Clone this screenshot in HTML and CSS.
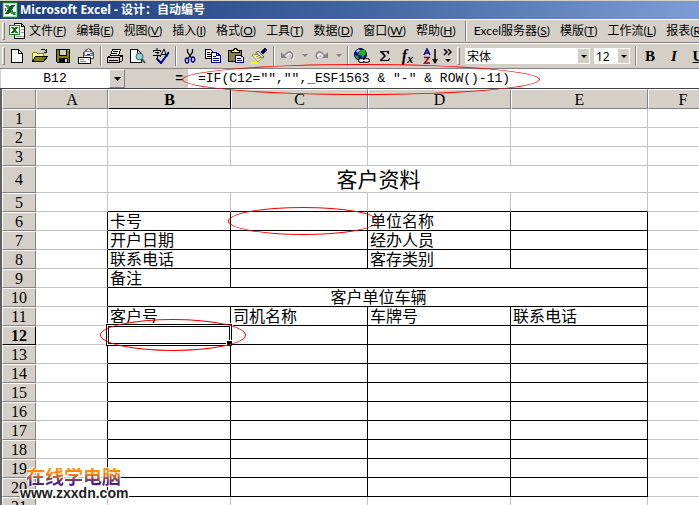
FILE: index.html
```html
<!DOCTYPE html>
<html lang="zh-CN">
<head>
    <meta charset="UTF-8">
    <meta name="viewport" content="width=device-width, initial-scale=1.0">
    <title>Microsoft Excel - 设计：自动编号</title>
    <link rel="stylesheet" href="styles.css">
</head>
<body>
    <header class="titlebar">
        <svg class="app-icon" width="16" height="16" viewBox="0 0 16 16" shape-rendering="crispEdges">
            <path fill="#fff" d="M0 0h16v16H0z"/>
            <path fill="none" stroke="#1a7a2c" d="M.5.5h15v15H.5z"/>
            <path fill="none" stroke="#a5d6a5" d="M1.500 1.500h13v13h-13z"/>
            <path fill="#2a9a3c" d="M3 3h4l6 9H9z"/>
            <path fill="#0c5a1c" d="M9 3h4l-6 9H3z"/>
            <path fill="#1a7a2c" d="M11 10h3v1h-3zM11 12h3v1h-3zM3 6h1v3H3z"/>
        </svg>
        <h1>Microsoft Excel - 设计：自动编号</h1>
    </header>

    <nav class="menubar">
        <span class="grip"></span>
        <svg class="doc-icon" width="16" height="16" viewBox="0 0 16 16" shape-rendering="crispEdges">
            <path fill="#fff" stroke="#000" d="M5.5.5h7l3 3v12h-10z"/>
            <path fill="none" stroke="#000" d="M12.5.5v3h3"/>
            <path fill="#999" d="M12 6h3v1h-3zM12 9h3v1h-3zM7 13h8v1H7z"/>
            <path fill="#fff" stroke="#148a28" d="M.5 2.500h10v9H.5z"/>
            <path fill="#148a28" d="M2 4h3l4 6H6z"/>
            <path fill="#0c6a1c" d="M6 4h3l-4 6H2z"/>
        </svg>
        <a href="#">文件(<u>F</u>)</a>
        <a href="#">编辑(<u>E</u>)</a>
        <a href="#">视图(<u>V</u>)</a>
        <a href="#">插入(<u>I</u>)</a>
        <a href="#">格式(<u>O</u>)</a>
        <a href="#">工具(<u>T</u>)</a>
        <a href="#">数据(<u>D</u>)</a>
        <a href="#">窗口(<u>W</u>)</a>
        <a href="#">帮助(<u>H</u>)</a>
        <span class="sep"></span>
        <a href="#">Excel服务器(<u>S</u>)</a>
        <a href="#">模版(<u>T</u>)</a>
        <a href="#">工作流(<u>L</u>)</a>
        <a href="#">报表(<u>R</u>)</a>
    </nav>

    <div class="toolbar">
        <span class="grip"></span>
        <button class="tool" aria-label="新建">
            <svg viewBox="0 0 16 16" shape-rendering="crispEdges"><path fill="#fff" stroke="#000" d="M2.500 1.500h7l4 4v9h-11z"/><path fill="none" stroke="#000" d="M9.500 1.500v4h4"/></svg>
        </button>
        <button class="tool" aria-label="打开">
            <svg viewBox="0 0 16 16" shape-rendering="crispEdges"><path fill="#ffff9c" stroke="#808000" d="M.5 13.500v-8l1-1h3l1 1h6v3"/><path fill="#848200" stroke="#000" d="M.5 13.500l3-5h12l-4 5z"/><path fill="none" stroke="#000" d="M8.500 2.500l1-1h3l2 2M14.500 1v3.500h-3"/></svg>
        </button>
        <button class="tool" aria-label="保存">
            <svg viewBox="0 0 16 16" shape-rendering="crispEdges"><path fill="#848200" stroke="#000" d="M1.500 1.500h13v13h-12l-1-1z"/><path fill="#d4d0c8" stroke="#000" d="M4.500 1.500h7v6h-7z"/><path fill="#000" d="M4 10h9v5H4z"/><path fill="#d4d0c8" d="M10 11h2v3h-2zM13 2h1v1h-1z"/></svg>
        </button>
        <button class="tool" aria-label="电子邮件">
            <svg viewBox="0 0 16 16" shape-rendering="crispEdges"><path fill="#fff" stroke="#555" d="M5.500 9.500v-5l5-4 5 4v6h-10z"/><path fill="#fff" stroke="#777" d="M6.500 3.500h8v4h-8z"/><path fill="#f00" d="M12 5h2v1h-2z"/><path fill="#008" d="M9 6h3v1H9z"/><path fill="#fff" stroke="#000" d="M.5 9.500h12v6H.5z"/><path stroke="#888" d="M2 11.500h4M2 13.500h6M10 11.500h1"/></svg>
        </button>
        <span class="sep"></span>
        <button class="tool" aria-label="打印">
            <svg viewBox="0 0 16 16" shape-rendering="crispEdges"><path fill="#fff" stroke="#000" d="M5.500 1.500h8l-2 6h-8z"/><path stroke="#000" d="M6 3.500h5M5 5.500h5"/><path fill="#d4d0c8" stroke="#000" d="M.5 9.500l3-2h12v5l-3 2H.5z"/><path fill="none" stroke="#000" d="M.5 9.500h12v5M12.500 9.500l3-2"/><path fill="#000" d="M2 12h9v1H2z"/><path fill="#ff0" d="M8 11h2v1H8z"/></svg>
        </button>
        <button class="tool" aria-label="打印预览">
            <svg viewBox="0 0 16 16"><path fill="#fff" stroke="#000" shape-rendering="crispEdges" d="M.5 1.500h7l4 4v9H.5z"/><path fill="none" stroke="#000" shape-rendering="crispEdges" d="M7.500 1.500v4h4"/><circle cx="9.500" cy="8.500" r="3.500" fill="#7cd8dc" stroke="#555"/><path stroke="#456" stroke-width="2" d="M12 11l3 4"/></svg>
        </button>
        <button class="tool" aria-label="拼写检查">
            <svg viewBox="0 0 16 16"><path fill="none" stroke="#000" d="M4 0v2M.5 4V2.500h7V4M2 4.500h4L4 6.500M0 7.500h8M4.500 7v3.500H3M7 9l4-8 3 8M9 6.500h5"/><path fill="none" stroke="#000084" stroke-width="2" d="M4 11l4 4 8-11"/></svg>
        </button>
        <span class="sep"></span>
        <button class="tool" aria-label="剪切">
            <svg viewBox="0 0 16 16"><path stroke="#000" fill="none" stroke-width="1.300" d="M5.500 1v3l4 6M10.500 1v3l-4 6"/><ellipse cx="5" cy="12.500" rx="1.700" ry="2.500" fill="none" stroke="#000084" stroke-width="1.300"/><ellipse cx="11" cy="11.500" rx="1.700" ry="2.500" fill="none" stroke="#000084" stroke-width="1.300"/></svg>
        </button>
        <button class="tool" aria-label="复制">
            <svg viewBox="0 0 16 16" shape-rendering="crispEdges"><path fill="#fff" stroke="#000" d="M.5 1.500h5l3 3v6h-8z"/><path stroke="#000" d="M2 4.500h3M2 6.500h5M2 8.500h5"/><path fill="#fff" stroke="#000084" d="M6.500 4.500h5l4 3v7h-9z"/><path fill="none" stroke="#000084" d="M11.500 4.500v3h4M8 8.500h3M8 10.500h6M8 12.500h6"/></svg>
        </button>
        <button class="tool" aria-label="粘贴">
            <svg viewBox="0 0 16 16" shape-rendering="crispEdges"><path fill="#84824a" stroke="#000" d="M.5 2.500h13v11H.5z"/><path fill="#ffff84" stroke="#000" d="M3.500 4.500v-2h2l1-2h2l1 2h2v2z"/><path fill="#fff" stroke="#000084" d="M7.500 7.500h5l3 2v5h-8z"/><path stroke="#000084" d="M9 10.500h4M9 12.500h5"/></svg>
        </button>
        <button class="tool" aria-label="格式刷">
            <svg viewBox="0 0 16 16"><path fill="#000084" stroke="#000" d="M10 4l4-4 2 2-4 4z"/><path fill="#e8e6dc" stroke="#555" d="M7 3l6 6-2 1-6-5z"/><path fill="#ffff84" stroke="#777" stroke-width=".7" d="M5 5l6 5-4 4-6-7z"/><path stroke="#555" stroke-width=".7" d="M3 7l4-1M5 9l4-2M6 11l4-2"/><path fill="#ff0" d="M0 14h7v2H0z"/></svg>
        </button>
        <span class="sep"></span>
        <button class="tool" aria-label="撤消">
            <svg viewBox="0 0 16 16"><path fill="none" stroke="#fff" stroke-width="1.500" d="M4 9l4-3c4-3 8 2 4 6"/><path fill="none" stroke="#848284" stroke-width="1.500" d="M3 9l4-4c4-3 8 2 4 6"/><path fill="#848284" d="M1 4v6h6z"/></svg>
        </button>
        <button class="tool drop" aria-label="撤消列表"><svg viewBox="0 0 7 4"><path fill="#848284" d="M1 0h6L4 3z"/></svg></button>
        <button class="tool" aria-label="恢复">
            <svg viewBox="0 0 16 16"><path fill="none" stroke="#fff" stroke-width="1.500" d="M12 10L9 7C5 4 1 9 5 12"/><path fill="none" stroke="#848284" stroke-width="1.500" d="M12 9L8 5C4 2 0 7 4 11"/><path fill="#848284" d="M14 4v6H8z"/></svg>
        </button>
        <button class="tool drop" aria-label="恢复列表"><svg viewBox="0 0 7 4"><path fill="#848284" d="M1 0h6L4 3z"/></svg></button>
        <span class="sep"></span>
        <button class="tool" aria-label="超链接">
            <svg viewBox="0 0 16 16"><circle cx="6.500" cy="6.500" r="6" fill="#0000c6" stroke="#003"/><path fill="#21b221" d="M6 2l5 0 1 4-4 4-1-3-3 0zM1 7l3 1 1 4-3-2z"/><path fill="#9ce" d="M2 3l3-2 1 2-3 2z"/><rect x="4.500" y="10.500" width="6" height="4" rx="2" fill="#d4d0c8" stroke="#000"/><rect x="9.500" y="10.500" width="6" height="4" rx="2" fill="#d4d0c8" stroke="#000"/><path stroke="#fff" d="M7 12.500h6"/></svg>
        </button>
        <button class="tool" aria-label="自动求和">
            <svg viewBox="0 0 16 16"><path fill="#000" d="M3 3h9v3h-1l-1-2H6l3 4-4 4h6l1-2h1l-1 3H3v-1l4-4-4-4z"/></svg>
        </button>
        <button class="tool fx" aria-label="粘贴函数"><i>f</i><i class="small">x</i></button>
        <button class="tool" aria-label="升序排序">
            <svg viewBox="0 0 16 16"><path fill="none" stroke="#000084" stroke-width="1.500" d="M1 7l3-6 3 6M2 5h4"/><path fill="none" stroke="#84001c" stroke-width="1.500" d="M1 9.500h5L1.500 15H7"/><path stroke="#000" stroke-width="1.500" d="M12 1v12"/><path fill="#000" d="M9 11h6l-3 5z"/></svg>
        </button>
        <button class="tool drop more" aria-label="其他按钮">
            <svg viewBox="0 0 9 14"><path fill="none" stroke="#000" stroke-width="1.500" d="M1 0l3 3-3 3M5 0l3 3-3 3"/><path fill="#000" d="M2 10h6l-3 3z"/></svg>
        </button>
        <span class="grip"></span>
        <span class="combo font-combo">
            <select aria-label="字体"><option>宋体</option></select>
            <svg class="arrow" viewBox="0 0 11 14"><path fill="#000" d="M3 6h6L6 9z"/></svg>
        </span>
        <span class="combo size-combo">
            <select aria-label="字号"><option>12</option></select>
            <svg class="arrow" viewBox="0 0 11 14"><path fill="#000" d="M3 6h6L6 9z"/></svg>
        </span>
        <span class="sep"></span>
        <button class="tool text"><b>B</b></button>
        <button class="tool text"><i>I</i></button>
        <button class="tool text"><u>U</u></button>
    </div>

    <div class="formula-bar">
        <input class="name-box" type="text" value="B12" aria-label="名称框">
        <button class="name-arrow" aria-label="名称列表"><svg viewBox="0 0 7 4"><path fill="#000" d="M0 0h7L3.500 4z"/></svg></button>
        <span class="equals">=</span>
        <div class="formula">
            <input type="text" value='=IF(C12="","",_ESF1563 &amp; "-" &amp; ROW()-11)' aria-label="编辑栏">
            <span class="mark mark-formula"></span>
        </div>
    </div>

    <main class="sheet">
        <table>
            <colgroup>
                <col class="col-head"><col class="col-a"><col class="col-b"><col class="col-c"><col class="col-d"><col class="col-e"><col>
            </colgroup>
            <thead>
                <tr><th></th><th>A</th><th class="active">B</th><th>C</th><th>D</th><th>E</th><th>F</th></tr>
            </thead>
            <tbody>
                <tr><th>1</th><td></td><td></td><td></td><td></td><td></td><td></td></tr>
                <tr><th>2</th><td></td><td></td><td></td><td></td><td></td><td></td></tr>
                <tr><th>3</th><td></td><td></td><td></td><td></td><td></td><td></td></tr>
                <tr class="tall"><th>4</th><td></td><td colspan="4" class="title">客户资料</td><td></td></tr>
                <tr class="top-edge"><th>5</th><td></td><td></td><td></td><td></td><td></td><td></td></tr>
                <tr class="boxed"><th>6</th><td></td><td>卡号</td><td><span class="mark mark-card"></span></td><td>单位名称</td><td></td><td></td></tr>
                <tr class="boxed"><th>7</th><td></td><td>开户日期</td><td></td><td>经办人员</td><td></td><td></td></tr>
                <tr class="boxed"><th>8</th><td></td><td>联系电话</td><td></td><td>客存类别</td><td></td><td></td></tr>
                <tr class="boxed"><th>9</th><td></td><td>备注</td><td colspan="3"></td><td></td></tr>
                <tr class="boxed"><th>10</th><td></td><td colspan="4" class="center">客户单位车辆</td><td></td></tr>
                <tr class="boxed"><th>11</th><td></td><td>客户号</td><td>司机名称</td><td>车牌号</td><td>联系电话</td><td></td></tr>
                <tr class="boxed"><th class="active">12</th><td></td><td><span class="selection"></span><span class="mark mark-cell"></span></td><td></td><td></td><td></td><td></td></tr>
                <tr class="boxed"><th>13</th><td></td><td></td><td></td><td></td><td></td><td></td></tr>
                <tr class="boxed"><th>14</th><td></td><td></td><td></td><td></td><td></td><td></td></tr>
                <tr class="boxed"><th>15</th><td></td><td></td><td></td><td></td><td></td><td></td></tr>
                <tr class="boxed"><th>16</th><td></td><td></td><td></td><td></td><td></td><td></td></tr>
                <tr class="boxed"><th>17</th><td></td><td></td><td></td><td></td><td></td><td></td></tr>
                <tr class="boxed"><th>18</th><td></td><td></td><td></td><td></td><td></td><td></td></tr>
                <tr class="boxed"><th>19</th><td></td><td></td><td></td><td></td><td></td><td></td></tr>
                <tr class="boxed"><th>20</th><td></td><td></td><td></td><td></td><td></td><td></td></tr>
                <tr><th>21</th><td></td><td></td><td></td><td></td><td></td><td></td></tr>
            </tbody>
        </table>
        <div class="watermark">
            <strong>在线学电脑</strong>
            <span>www.zxxdn.com</span>
        </div>
    </main>
</body>
</html>
```
FILE: styles.css
```css
* {
    margin: 0;
    padding: 0;
    box-sizing: border-box;
}

body {
    display: flex;
    flex-direction: column;
    height: 100vh;
    overflow: hidden;
    background: #d4d0c8;
    color: #000;
    font-family: "Noto Sans", "Noto Sans CJK SC", sans-serif;
    font-size: 12px;
}

button,
input,
select {
    border: none;
    border-radius: 0;
    background: none;
    color: inherit;
    font: inherit;
}

/* Title bar */
.titlebar {
    display: flex;
    flex: none;
    align-items: center;
    height: 18px;
    margin-top: 1px;
    padding-left: 2px;
    background: linear-gradient(90deg, #1c3c7c, #40649f 50%, #7c9cd4);
    color: #fff;
}

.titlebar h1 {
    margin-left: 2px;
    font-family: "Open Sans", "Noto Sans CJK SC", sans-serif;
    font-size: 12px;
    font-weight: 700;
    line-height: 18px;
    white-space: nowrap;
}

/* Menu and toolbar */
.menubar,
.toolbar {
    display: flex;
    flex: none;
    align-items: center;
    overflow: hidden;
    border-top: 1px solid #fff;
    border-bottom: 1px solid #848284;
    white-space: nowrap;
}

.menubar {
    gap: 10px;
    height: 24px;
    padding-left: 2px;
    font-family: Lato, "Noto Sans CJK SC", sans-serif;
}

.menubar a {
    flex: none;
    color: #000;
    line-height: 22px;
    text-decoration: none;
}

.menubar .grip,
.menubar .doc-icon {
    margin-right: -6px;
}

.menubar .sep {
    margin: 0 -4px;
}

svg {
    flex: none;
}

.grip {
    flex: none;
    width: 3px;
    height: 18px;
    border: 1px solid #848284;
    border-color: #fff #848284 #848284 #fff;
}

.sep {
    flex: none;
    width: 6px;
    height: 20px;
    background: linear-gradient(90deg, transparent 3px, #848284 3px, #848284 4px, #fff 4px, #fff 5px, transparent 5px);
}

.toolbar {
    height: 26px;
    padding-left: 2px;
}

.tool {
    display: flex;
    flex: none;
    align-items: center;
    justify-content: center;
    width: 23px;
    height: 22px;
}

.tool svg {
    width: 16px;
    height: 16px;
}

.tool.drop {
    width: 11px;
}

.tool.drop svg {
    width: 7px;
    height: 4px;
}

.tool.more svg {
    width: 9px;
    height: 14px;
}

.tool.fx {
    font-family: "Liberation Serif", serif;
    font-size: 16px;
    font-weight: 700;
}

.tool .small {
    font-size: 12px;
    line-height: 8px;
    align-self: flex-end;
    margin-bottom: 4px;
}

.tool.text {
    width: 24px;
    font-family: "Liberation Serif", serif;
    font-size: 15px;
    font-weight: 700;
}

.toolbar .grip ~ .grip {
    margin: 0 5px 0 4px;
}

.combo {
    position: relative;
    flex: none;
    height: 16px;
    margin-right: 4px;
    background: #fff;
}

.combo select {
    width: 100%;
    height: 16px;
    padding-left: 2px;
    appearance: none;
    line-height: 16px;
}

.combo .arrow {
    position: absolute;
    top: 1px;
    right: 1px;
    width: 11px;
    height: 14px;
    background: #d4d0c8;
    pointer-events: none;
}

.font-combo {
    width: 125px;
}

.size-combo {
    width: 36px;
    margin-right: 2px;
}

/* Formula bar */
.formula-bar {
    display: flex;
    flex: none;
    height: 20px;
    padding-left: 1px;
    border-bottom: 1px solid #424142;
    font-family: "Liberation Mono", "Noto Sans CJK SC", monospace;
    font-size: 13px;
}

.name-box {
    width: 108px;
    background: #fff;
    text-align: center;
}

.name-arrow {
    display: flex;
    align-items: center;
    justify-content: center;
    width: 16px;
    border: 1px solid #848284;
    border-color: #fff #848284 #848284 #fff;
    background: #d4d0c8;
}

.name-arrow svg {
    width: 7px;
    height: 4px;
}

.equals {
    width: 63px;
    padding-right: 5px;
    font-weight: 700;
    line-height: 20px;
    text-align: right;
}

.formula {
    position: relative;
    flex: 1;
    background: #fff;
}

.formula input {
    width: 100%;
    height: 19px;
    padding-left: 10px;
}

/* Red ovals round the cells being explained */
.mark {
    position: absolute;
    z-index: 2;
    border: 1px solid #f00;
    border-radius: 50%;
    pointer-events: none;
}

.mark-formula {
    top: -5px;
    left: -6px;
    width: 358px;
    height: 31px;
}

.mark-card {
    top: -5px;
    left: -3px;
    width: 150px;
    height: 28px;
}

.mark-cell {
    top: -7px;
    left: -8px;
    width: 146px;
    height: 32px;
}

/* Sheet */
.sheet {
    position: relative;
    flex: 1;
    min-height: 0;
    border-left: 2px solid #636163;
    background: #fff;
}

table {
    width: 100%;
    min-width: 716px;
    border-collapse: separate;
    border-spacing: 0;
    table-layout: fixed;
}

.col-head {
    width: 34px;
}

.col-a {
    width: 72px;
}

.col-b {
    width: 123px;
}

.col-c,
.col-e {
    width: 137px;
}

.col-d {
    width: 143px;
}

tr {
    height: 19px;
}

thead tr {
    height: 20px;
}

.tall {
    height: 27px;
}

th {
    padding-top: 1px;
    border: 1px solid #848284;
    border-top-color: #fff;
    border-left-color: #fff;
    background: #d4d0c8;
    font-family: "Liberation Serif", serif;
    font-size: 16px;
    font-weight: 400;
    line-height: 16px;
}

th.active {
    border-right-color: #000;
    border-bottom-color: #000;
    font-weight: 700;
}

td {
    position: relative;
    padding-left: 2px;
    border-right: 1px solid #c6c3c6;
    border-bottom: 1px solid #c6c3c6;
    font-size: 16px;
    line-height: 18px;
    white-space: nowrap;
}

.title {
    font-size: 21px;
    text-align: center;
}

.center {
    text-align: center;
}

.boxed td {
    border-color: #000;
}

.boxed td:nth-child(2) {
    border-bottom-color: #c6c3c6;
}

.boxed td:last-child {
    border-color: #c6c3c6;
}

.top-edge td:not(:nth-child(2), :last-child) {
    border-bottom-color: #000;
}

.selection {
    position: absolute;
    top: -2px;
    left: -2px;
    width: calc(100% + 4px);
    height: calc(100% + 4px);
    border: 1px solid #000;
    outline: 1px solid #fff;
    box-shadow: inset 0 0 0 1px #fff, inset 0 0 0 2px #000;
}

.selection::after {
    content: "";
    position: absolute;
    right: -2px;
    bottom: -2px;
    width: 5px;
    height: 5px;
    border: 1px solid #fff;
    background: #000;
}

.watermark {
    position: absolute;
    bottom: 5px;
    left: 18px;
    z-index: 3;
    display: flex;
    flex-direction: column;
}

.watermark strong {
    margin-left: 6px;
    background: linear-gradient(#ff8a10 30%, #4a2080 80%);
    background-clip: text;
    color: transparent;
    filter: drop-shadow(1px 1px 0 #fff) drop-shadow(-1px -1px 0 #fff);
    font-size: 19px;
    font-weight: 700;
    line-height: 18px;
}

.watermark span {
    color: #222;
    font-family: "Liberation Sans", sans-serif;
    font-size: 14px;
    font-weight: 700;
    line-height: 14px;
    text-shadow: 1px 1px #fff, -1px -1px #fff, 1px -1px #fff, -1px 1px #fff;
}
```
